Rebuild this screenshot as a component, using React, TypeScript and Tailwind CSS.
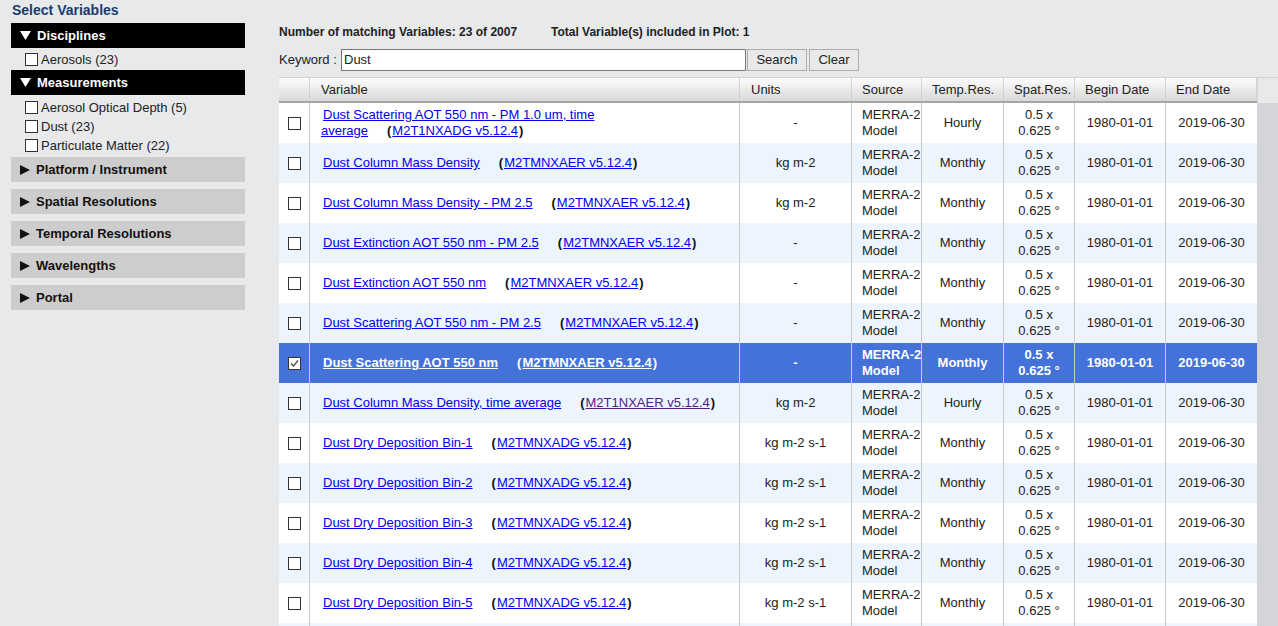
import React from "react";

type Row = {
  name: string[];
  ds: string;
  units: string;
  temp: string;
  visited?: boolean;
  selected?: boolean;
  empty?: boolean;
};

const rows: Row[] = [
  { name: ["Dust Scattering AOT 550 nm - PM 1.0 um, time", "average"], ds: "M2T1NXADG v5.12.4", units: "-", temp: "Hourly" },
  { name: ["Dust Column Mass Density"], ds: "M2TMNXAER v5.12.4", units: "kg m-2", temp: "Monthly" },
  { name: ["Dust Column Mass Density - PM 2.5"], ds: "M2TMNXAER v5.12.4", units: "kg m-2", temp: "Monthly" },
  { name: ["Dust Extinction AOT 550 nm - PM 2.5"], ds: "M2TMNXAER v5.12.4", units: "-", temp: "Monthly" },
  { name: ["Dust Extinction AOT 550 nm"], ds: "M2TMNXAER v5.12.4", units: "-", temp: "Monthly" },
  { name: ["Dust Scattering AOT 550 nm - PM 2.5"], ds: "M2TMNXAER v5.12.4", units: "-", temp: "Monthly" },
  { name: ["Dust Scattering AOT 550 nm"], ds: "M2TMNXAER v5.12.4", units: "-", temp: "Monthly", selected: true },
  { name: ["Dust Column Mass Density, time average"], ds: "M2T1NXAER v5.12.4", units: "kg m-2", temp: "Hourly", visited: true },
  { name: ["Dust Dry Deposition Bin-1"], ds: "M2TMNXADG v5.12.4", units: "kg m-2 s-1", temp: "Monthly" },
  { name: ["Dust Dry Deposition Bin-2"], ds: "M2TMNXADG v5.12.4", units: "kg m-2 s-1", temp: "Monthly" },
  { name: ["Dust Dry Deposition Bin-3"], ds: "M2TMNXADG v5.12.4", units: "kg m-2 s-1", temp: "Monthly" },
  { name: ["Dust Dry Deposition Bin-4"], ds: "M2TMNXADG v5.12.4", units: "kg m-2 s-1", temp: "Monthly" },
  { name: ["Dust Dry Deposition Bin-5"], ds: "M2TMNXADG v5.12.4", units: "kg m-2 s-1", temp: "Monthly" },
  { name: [], ds: "", units: "", temp: "", empty: true },
];

function Box({ checked = false }: { checked?: boolean }) {
  return (
    <div className="w-[13px] h-[13px] border border-[#333] bg-white shrink-0 flex items-center justify-center">
      {checked && (
        <svg width="11" height="11" viewBox="0 0 11 11">
          <path d="M2 5.5 L4.5 8 L9 2.5" fill="none" stroke="#555" strokeWidth="1.5" />
        </svg>
      )}
    </div>
  );
}

function DownTri() {
  return (
    <svg width="11" height="9" viewBox="0 0 11 9" className="shrink-0">
      <polygon points="0,0 11,0 5.5,9" fill="#fff" />
    </svg>
  );
}

function RightTri() {
  return (
    <svg width="10" height="10" viewBox="0 0 10 10" className="shrink-0">
      <polygon points="0,0 10,5 0,10" fill="#111" />
    </svg>
  );
}

function SideItem({ label }: { label: string }) {
  return (
    <div className="h-[19px] flex items-center pl-[14px] gap-[3px] text-[13px] text-[#222]">
      <Box />
      <span>{label}</span>
    </div>
  );
}

function Collapsed({ label }: { label: string }) {
  return (
    <div className="h-[25px] mb-[7px] bg-[#cdcdcd] flex items-center pl-[9px] gap-[6px] text-[13px] font-bold text-[#111]">
      <RightTri />
      <span>{label}</span>
    </div>
  );
}

const widths = ["w-[31px]", "w-[430px]", "w-[112px]", "w-[70px]", "w-[82px]", "w-[71px]", "w-[91px]", "w-[91px]"];

export default function App() {
  return (
    <div className="w-[1278px] h-[626px] overflow-hidden flex bg-[#e7e9eb] font-['Liberation_Sans',Arial,sans-serif] text-[#222]">
      {/* Sidebar */}
      <div className="w-[245px] pl-[11px] shrink-0">
        <div className="pl-[1px] pt-[2px] leading-[17px] text-[14px] font-bold text-[#1a3c6e] mb-[4px]">
          Select Variables
        </div>
        <div className="h-[25px] bg-black flex items-center pl-[9px] gap-[6px] text-[13px] font-bold text-white">
          <DownTri />
          <span>Disciplines</span>
        </div>
        <div className="pt-[2px] pb-[1px]">
          <SideItem label="Aerosols (23)" />
        </div>
        <div className="h-[25px] bg-black flex items-center pl-[9px] gap-[6px] text-[13px] font-bold text-white">
          <DownTri />
          <span>Measurements</span>
        </div>
        <div className="pt-[3px] pb-[2px]">
          <SideItem label="Aerosol Optical Depth (5)" />
          <SideItem label="Dust (23)" />
          <SideItem label="Particulate Matter (22)" />
        </div>
        <Collapsed label="Platform / Instrument" />
        <Collapsed label="Spatial Resolutions" />
        <Collapsed label="Temporal Resolutions" />
        <Collapsed label="Wavelengths" />
        <Collapsed label="Portal" />
      </div>

      {/* Main */}
      <div className="ml-[34px] pt-[25px] flex-1 flex flex-col">
        <div className="flex h-[15px] leading-[15px] text-[12px] font-bold text-[#222]">
          <span className="w-[272px]">Number of matching Variables: 23 of 2007</span>
          <span>Total Variable(s) included in Plot: 1</span>
        </div>
        <div className="mt-[9px] h-[22px] flex items-center text-[13px]">
          <span className="w-[62px]">Keyword :</span>
          <div className="w-[405px] h-[22px] border border-[#767676] bg-white pl-[2px] flex items-center">Dust</div>
          <div className="ml-[1px] w-[60px] h-[22px] border border-[#adadad] bg-[#e9e9e9] flex items-center justify-center">Search</div>
          <div className="ml-[2px] w-[50px] h-[22px] border border-[#adadad] bg-[#e9e9e9] flex items-center justify-center">Clear</div>
        </div>

        <div className="mt-[6px] flex">
          <div className="w-[978px] shrink-0">
            {/* Header */}
            <div className="flex h-[26px] border-t border-[#d2d2d2] border-b-2 border-b-[#a5a5a5] bg-linear-to-b from-[#fdfdfd] to-[#d8d8d8] text-[13px]">
              {["", "Variable", "Units", "Source", "Temp.Res.", "Spat.Res.", "Begin Date", "End Date"].map((h, i) => (
                <div
                  key={i}
                  className={`${widths[i]} shrink-0 border-r border-[#d3d3d3] flex items-center ${i === 1 || i === 2 ? "pl-[11px]" : "pl-[10px]"} whitespace-nowrap`}
                >
                  {h}
                </div>
              ))}
            </div>
            {/* Body */}
            {rows.map((r, idx) => {
              const sel = !!r.selected;
              const bg = sel ? "bg-[#4472d8] text-white font-bold" : idx % 2 === 0 ? "bg-white" : "bg-[#ecf4fd]";
              const link = sel ? "text-white underline" : "text-[#0000ee] underline";
              const dsLink = sel ? "text-white underline" : r.visited ? "text-[#551a8b] underline" : "text-[#0000ee] underline";
              return (
                <div key={idx} className={`flex h-[40px] text-[13px] leading-[16px] ${bg}`}>
                  <div className="w-[31px] shrink-0 border-r border-[#c9c9c9] flex items-center justify-center">
                    {!r.empty && <Box checked={sel} />}
                  </div>
                  <div className="w-[430px] shrink-0 border-r border-[#c9c9c9] flex items-center pl-[11px] pr-[6px]">
                    {!r.empty && (
                      <div className="indent-[2px]">
                        <span className={link}>
                          {r.name[0]}
                          {r.name.length > 1 && (
                            <>
                              <br />
                              {r.name[1]}
                            </>
                          )}
                        </span>
                        <span className={`ml-[19px] font-bold ${sel ? "text-white" : "text-[#111]"}`}>(</span>
                        <span className={`ml-[1px] ${dsLink}`}>{r.ds}</span>
                        <span className={`ml-[1px] font-bold ${sel ? "text-white" : "text-[#111]"}`}>)</span>
                      </div>
                    )}
                  </div>
                  <div className="w-[112px] shrink-0 border-r border-[#c9c9c9] flex items-center justify-center">{r.units}</div>
                  <div className="w-[70px] shrink-0 border-r border-[#c9c9c9] flex items-center pl-[10px] whitespace-nowrap">
                    {!r.empty && (
                      <div>
                        MERRA-2
                        <br />
                        Model
                      </div>
                    )}
                  </div>
                  <div className="w-[82px] shrink-0 border-r border-[#c9c9c9] flex items-center justify-center">{r.temp}</div>
                  <div className="w-[71px] shrink-0 border-r border-[#c9c9c9] flex items-center justify-center text-center whitespace-nowrap">
                    {!r.empty && (
                      <div>
                        0.5 x
                        <br />
                        0.625 °
                      </div>
                    )}
                  </div>
                  <div className="w-[91px] shrink-0 border-r border-[#c9c9c9] flex items-center justify-center">{r.empty ? "" : "1980-01-01"}</div>
                  <div className="w-[91px] shrink-0 flex items-center justify-center">{r.empty ? "" : "2019-06-30"}</div>
                </div>
              );
            })}
          </div>
          <div className="w-[21px] shrink-0 flex flex-col">
            <div className="h-[26px] border-t border-[#d2d2d2] border-l border-l-[#d6d6d6] bg-[#e9e9e9]"></div>
            <div className="flex-1 bg-[#d3d5d8]"></div>
          </div>
        </div>
      </div>
    </div>
  );
}
